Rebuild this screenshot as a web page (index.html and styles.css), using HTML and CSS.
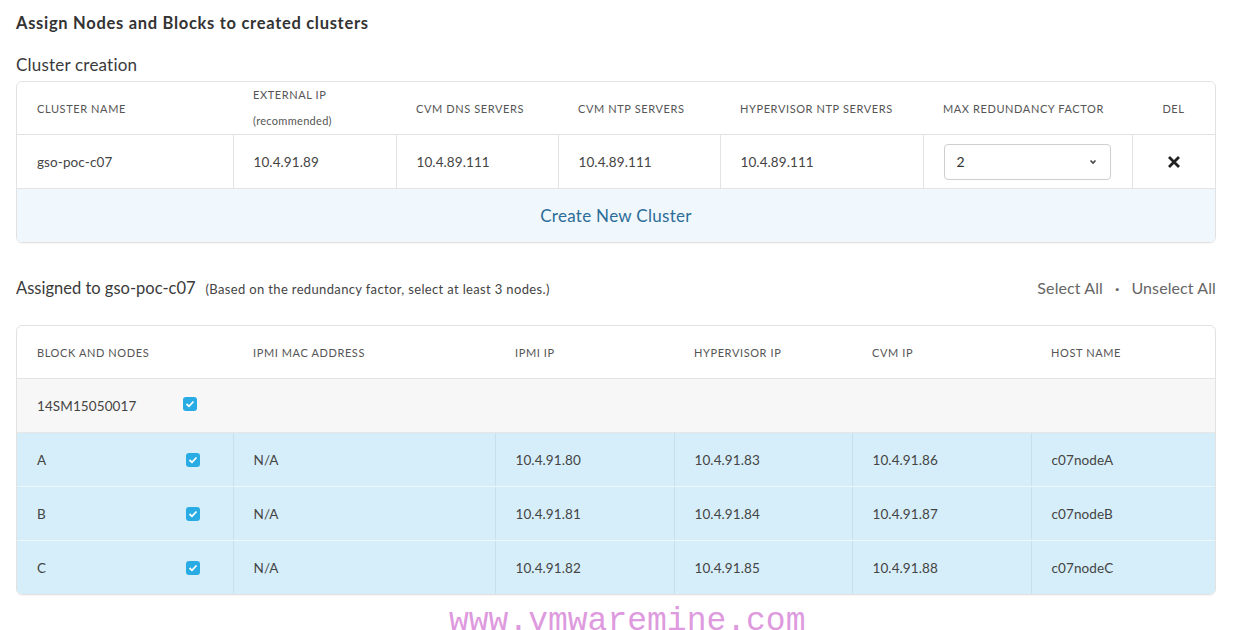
FILE: index.html
```html
<!DOCTYPE html>
<html>
<head>
<meta charset="utf-8">
<link rel="stylesheet" href="styles.css">
</head>
<body>
<div class="page">
  <h1 class="title">Assign Nodes and Blocks to created clusters</h1>
  <h2 class="subtitle">Cluster creation</h2>
  <div class="card">
    <table class="grid clusters">
      <colgroup>
        <col style="width:216px"><col style="width:163px"><col style="width:162px"><col style="width:162px"><col style="width:203px"><col style="width:209px"><col>
      </colgroup>
      <thead>
        <tr>
          <th>CLUSTER NAME</th>
          <th class="two"><span>EXTERNAL IP</span><span class="rec">(recommended)</span></th>
          <th>CVM DNS SERVERS</th>
          <th>CVM NTP SERVERS</th>
          <th>HYPERVISOR NTP SERVERS</th>
          <th>MAX REDUNDANCY FACTOR</th>
          <th class="center">DEL</th>
        </tr>
      </thead>
      <tbody>
        <tr class="data">
          <td>gso-poc-c07</td>
          <td>10.4.91.89</td>
          <td>10.4.89.111</td>
          <td>10.4.89.111</td>
          <td>10.4.89.111</td>
          <td><div class="select"><span>2</span><svg width="8" height="6" viewBox="0 0 8 6"><path d="M1.5 1.5 L4 4 L6.5 1.5" fill="none" stroke="#444" stroke-width="1.6"/></svg></div></td>
          <td class="center"><svg width="14" height="14" viewBox="0 0 14 14"><path d="M2 2 L12 12 M12 2 L2 12" stroke="#222" stroke-width="2.8" stroke-linecap="butt"/></svg></td>
        </tr>
        <tr class="create">
          <td colspan="7">Create New Cluster</td>
        </tr>
      </tbody>
    </table>
  </div>

  <div class="assigned">
    <div class="assigned-left"><span class="assigned-title">Assigned to gso-poc-c07</span><span class="note">(Based on the redundancy factor, select at least 3 nodes.)</span></div>
    <div class="links"><span>Select All</span><span class="dot">·</span><span>Unselect All</span></div>
  </div>

  <div class="card">
    <table class="grid nodes">
      <colgroup>
        <col style="width:216px"><col style="width:262px"><col style="width:179px"><col style="width:178px"><col style="width:179px"><col>
      </colgroup>
      <thead>
        <tr>
          <th>BLOCK AND NODES</th>
          <th>IPMI MAC ADDRESS</th>
          <th>IPMI IP</th>
          <th>HYPERVISOR IP</th>
          <th>CVM IP</th>
          <th>HOST NAME</th>
        </tr>
      </thead>
      <tbody>
        <tr class="block">
          <td><div class="cellflex block-cell"><span>14SM15050017</span><span class="check"><svg width="10" height="8" viewBox="0 0 10 8"><path d="M1.5 4 L4 6.3 L8.5 1.5" fill="none" stroke="#fff" stroke-width="1.8"/></svg></span></div></td>
          <td colspan="5"></td>
        </tr>
        <tr class="node">
          <td><div class="cellflex"><span>A</span><span class="check"><svg width="10" height="8" viewBox="0 0 10 8"><path d="M1.5 4 L4 6.3 L8.5 1.5" fill="none" stroke="#fff" stroke-width="1.8"/></svg></span></div></td>
          <td>N/A</td><td>10.4.91.80</td><td>10.4.91.83</td><td>10.4.91.86</td><td>c07nodeA</td>
        </tr>
        <tr class="node">
          <td><div class="cellflex"><span>B</span><span class="check"><svg width="10" height="8" viewBox="0 0 10 8"><path d="M1.5 4 L4 6.3 L8.5 1.5" fill="none" stroke="#fff" stroke-width="1.8"/></svg></span></div></td>
          <td>N/A</td><td>10.4.91.81</td><td>10.4.91.84</td><td>10.4.91.87</td><td>c07nodeB</td>
        </tr>
        <tr class="node">
          <td><div class="cellflex"><span>C</span><span class="check"><svg width="10" height="8" viewBox="0 0 10 8"><path d="M1.5 4 L4 6.3 L8.5 1.5" fill="none" stroke="#fff" stroke-width="1.8"/></svg></span></div></td>
          <td>N/A</td><td>10.4.91.82</td><td>10.4.91.85</td><td>10.4.91.88</td><td>c07nodeC</td>
        </tr>
      </tbody>
    </table>
  </div>
  <div class="watermark">www.vmwaremine.com</div>
</div>
</body>
</html>
```

FILE: styles.css
```css
html, body {
  margin: 0;
  padding: 0;
  background: #ffffff;
}
body {
  font-family: Lato, "Open Sans", "Liberation Sans", sans-serif;
  color: #444;
}
.page {
  width: 1200px;
  padding: 13px 0 0 16px;
}
.title {
  margin: 0;
  font-size: 16.5px;
  line-height: 20px;
  font-weight: 700;
  letter-spacing: 0.7px;
  color: #333;
}
.subtitle {
  margin: 21px 0 0 0;
  font-size: 17px;
  line-height: 22px;
  font-weight: 400;
  letter-spacing: 0.2px;
  color: #3a3a3a;
}
.card {
  border: 1px solid #e2e2e2;
  border-radius: 6px;
  overflow: hidden;
  margin-top: 5px;
  box-shadow: 0 1px 1px rgba(0,0,0,0.04);
}
.grid {
  width: 100%;
  border-collapse: collapse;
  table-layout: fixed;
}
.grid th {
  text-align: left;
  font-weight: 400;
  font-size: 11px;
  color: #555;
  padding: 0 0 0 20px;
  height: 52px;
  border-bottom: 1px solid #e3e3e3;
  letter-spacing: 0.6px;
  white-space: nowrap;
}
.grid th:first-child, .grid td:first-child {
  padding-left: 20px;
}
.grid th.two span {
  display: block;
  line-height: 26px;
}
.grid th.two .rec {
  letter-spacing: 0.3px;
}
.grid .center {
  text-align: center;
  padding-left: 0;
}
.grid td {
  font-size: 13.5px;
  letter-spacing: 0.1px;
  color: #444;
  padding: 0 0 0 20px;
  height: 53px;
}
.clusters tr.data td {
  border-right: 1px solid #e3e3e3;
  border-bottom: 1px solid #e3e3e3;
}
.clusters tr.data td:last-child {
  border-right: none;
}
.clusters tr.data td.center svg {
  display: block;
  margin: 0 auto;
}
.select {
  width: 167px;
  height: 36px;
  border: 1px solid #cfcfcf;
  border-radius: 4px;
  box-sizing: border-box;
  display: flex;
  align-items: center;
  justify-content: space-between;
  padding: 0 13px 0 12px;
  font-size: 14px;
  color: #333;
  background: #fff;
}
.select svg {
  display: block;
}
.clusters tr.create td {
  background: #f1f8fd;
  text-align: center;
  font-size: 17px;
  letter-spacing: 0.3px;
  color: #2c6d98;
  padding-left: 0;
  height: 53px;
}
.assigned {
  display: flex;
  justify-content: space-between;
  align-items: baseline;
  margin-top: 35px;
  margin-bottom: 25px;
  height: 22px;
}
.assigned-title {
  font-size: 16.5px;
  color: #3a3a3a;
}
.note {
  font-size: 13px;
  letter-spacing: 0.35px;
  color: #444;
  margin-left: 10px;
}
.links {
  font-size: 16px;
  letter-spacing: 0.1px;
  color: #666;
  display: flex;
  gap: 12px;
}
.links .dot {
  font-weight: 700;
}
.nodes th {
  height: 52px;
}
.nodes td {
  height: 53px;
}
.nodes tr.block td {
  background: #f7f7f7;
  border-bottom: 1px solid #e6e6e6;
}
.nodes tr.node td {
  background: #d6eef9;
  border-right: 1px solid #c9dfe9;
  border-bottom: 1px solid #edf6fb;
}
.nodes tr.node td:last-child {
  border-right: none;
}
.nodes tr.node:last-child td {
  border-bottom: none;
}
.cellflex {
  display: flex;
  align-items: center;
}
.cellflex span:first-child {
  width: 149px;
}
.block-cell span:first-child {
  width: 146px;
}
.check {
  width: 14px;
  height: 14px;
  border-radius: 3px;
  background: #29ace3;
  display: flex;
  align-items: center;
  justify-content: center;
}
.block-cell .check {
  margin-top: -3px;
}
.watermark {
  font-family: "Liberation Mono", "DejaVu Sans Mono", monospace;
  font-size: 33px;
  line-height: 30px;
  color: #de9ade;
  margin: 12px 0 0 433px;
}
```
